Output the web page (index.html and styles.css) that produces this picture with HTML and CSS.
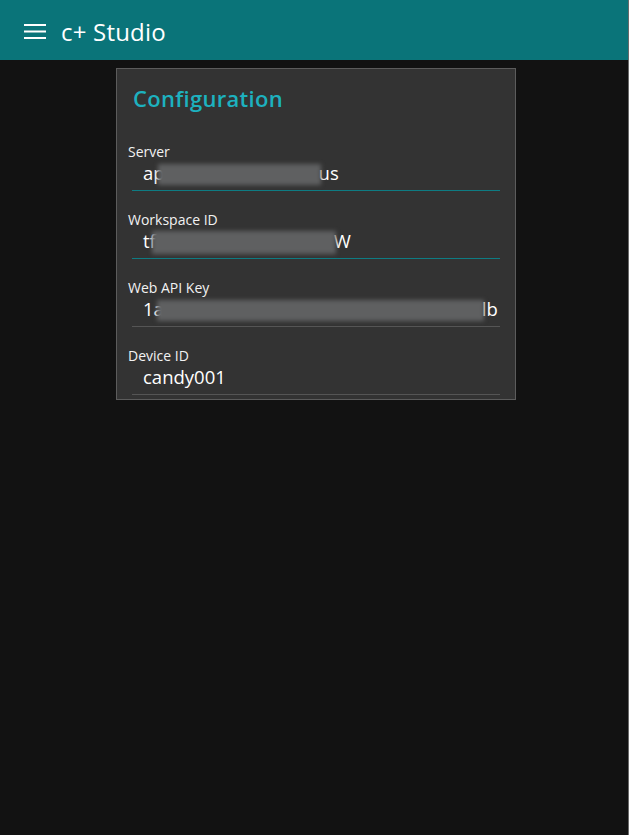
FILE: index.html
```html
<!DOCTYPE html>
<html>
<head>
<meta charset="utf-8">
<link rel="stylesheet" href="styles.css">
</head>
<body>
<header class="topbar">
  <svg class="menu-icon" width="22" height="16" viewBox="0 0 22 16"><rect x="0" y="1" width="22" height="2" fill="#fff"/><rect x="0" y="7.5" width="22" height="2" fill="#fff"/><rect x="0" y="14" width="22" height="2" fill="#fff"/></svg>
  <span class="app-title">c+ Studio</span>
</header>
<main class="content">
  <section class="card">
    <h1 class="card-title">Configuration</h1>
    <div class="field">
      <label class="field-label">Server</label>
      <div class="field-value active"><span>ap</span><span class="blur" style="width:163px"></span><span>us</span></div>
    </div>
    <div class="field">
      <label class="field-label">Workspace ID</label>
      <div class="field-value active"><span>tf</span><span class="blur blur-tall narrow-overlap" style="width:184px"></span><span>W</span></div>
    </div>
    <div class="field">
      <label class="field-label">Web API Key</label>
      <div class="field-value"><span>1a</span><span class="blur" style="width:327px"></span><span>lb</span></div>
    </div>
    <div class="field">
      <label class="field-label">Device ID</label>
      <div class="field-value"><span>candy001</span></div>
    </div>
  </section>
</main>
</body>
</html>
```
FILE: styles.css
```css
html, body { margin: 0; padding: 0; }
body {
  background: #121212;
  font-family: "Open Sans", "Noto Sans", sans-serif;
  color: #fff;
  height: 835px;
  overflow: hidden;
  border-right: 1px solid #6a6a6a;
  box-sizing: border-box;
}
.topbar {
  height: 60px;
  box-sizing: border-box;
  background: #0a7479;
  display: flex;
  align-items: center;
  padding-left: 24px;
}
.menu-icon { display: block; margin-right: 15px; margin-top: 1px; }
.app-title { font-size: 24px; line-height: 32px; color: #fff; margin-top: 3px; letter-spacing: 0.2px; }
.content { padding-top: 8px; padding-left: 116px; }
.card {
  width: 400px;
  height: 332px;
  box-sizing: border-box;
  background: #333333;
  border: 1px solid #5c5c5c;
  padding: 14px 15px 0 11px;
}
.card-title {
  margin: 0 0 31px 5px;
  font-size: 22px;
  font-weight: 600;
  color: #1db1bf;
  line-height: 30px;
  letter-spacing: 0.3px;
}
.field { margin-bottom: 21px; }
.field-label {
  display: block;
  font-size: 14px;
  line-height: 16px;
  color: #f2f2f2;
}
.field-value {
  margin-left: 4px;
  padding-left: 11px;
  padding-bottom: 5px;
  height: 25px;
  border-bottom: 1px solid #555;
  display: flex;
  align-items: flex-start;
  font-size: 18.5px;
  line-height: 25px;
  color: #fff;
  white-space: nowrap;
}
.field-value.active { border-bottom-color: #0e7c83; }
.blur {
  display: inline-block;
  height: 21px;
  margin-top: 4px;
  margin-left: -7px;
  margin-right: -2px;
  background: #5f6061;
  filter: blur(2px);
}
.blur-tall { height: 23px; margin-top: 3px; }
.narrow-overlap { margin-left: -4px; }
```
